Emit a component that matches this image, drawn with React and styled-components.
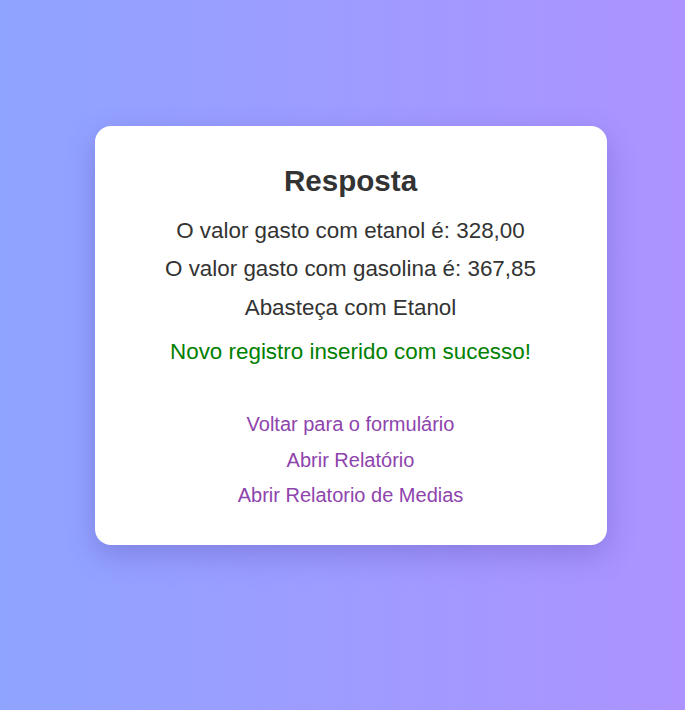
import React from "react";
import styled, { createGlobalStyle } from "styled-components";

const GlobalStyle = createGlobalStyle`
  html, body {
    margin: 0;
    padding: 0;
  }
  body {
    font-family: "Liberation Sans", Arial, sans-serif;
    background: linear-gradient(to right, #8fa4ff, #ad93ff);
    min-height: 710px;
  }
`;

const Page = styled.div`
  min-height: 710px;
  box-sizing: border-box;
  display: flex;
  justify-content: center;
  align-items: flex-start;
  padding: 126px 0 0 16px;
`;

const Card = styled.div`
  width: 512px;
  box-sizing: border-box;
  background: #ffffff;
  border-radius: 16px;
  padding: 38px 24px 38px;
  box-shadow: 0 10px 30px rgba(70, 50, 150, 0.28);
  text-align: center;
  color: #333333;
`;

const Title = styled.h2`
  margin: 0 0 20px;
  font-size: 29.6px;
  line-height: 34px;
  font-weight: bold;
  color: #333333;
`;

const Line = styled.p`
  margin: 0 0 ${(p) => p.$gap ?? 12.7}px;
  font-size: 22.4px;
  line-height: 25.76px;
  color: ${(p) => p.$color || "#333333"};
`;

const Links = styled.nav`
  display: flex;
  flex-direction: column;
  align-items: center;
  gap: 12.5px;
  margin-top: 48.4px;
`;

const LinkItem = styled.a`
  font-size: 20px;
  line-height: 23px;
  color: #8e44ad;
  text-decoration: none;
`;

export default function App() {
  return (
    <>
      <GlobalStyle />
      <Page>
        <Card>
          <Title>Resposta</Title>
          <Line>O valor gasto com etanol é: 328,00</Line>
          <Line>O valor gasto com gasolina é: 367,85</Line>
          <Line $gap={18.2}>Abasteça com Etanol</Line>
          <Line $gap={0} $color="#008000">Novo registro inserido com sucesso!</Line>
          <Links>
            <LinkItem href="#">Voltar para o formulário</LinkItem>
            <LinkItem href="#">Abrir Relatório</LinkItem>
            <LinkItem href="#">Abrir Relatorio de Medias</LinkItem>
          </Links>
        </Card>
      </Page>
    </>
  );
}
